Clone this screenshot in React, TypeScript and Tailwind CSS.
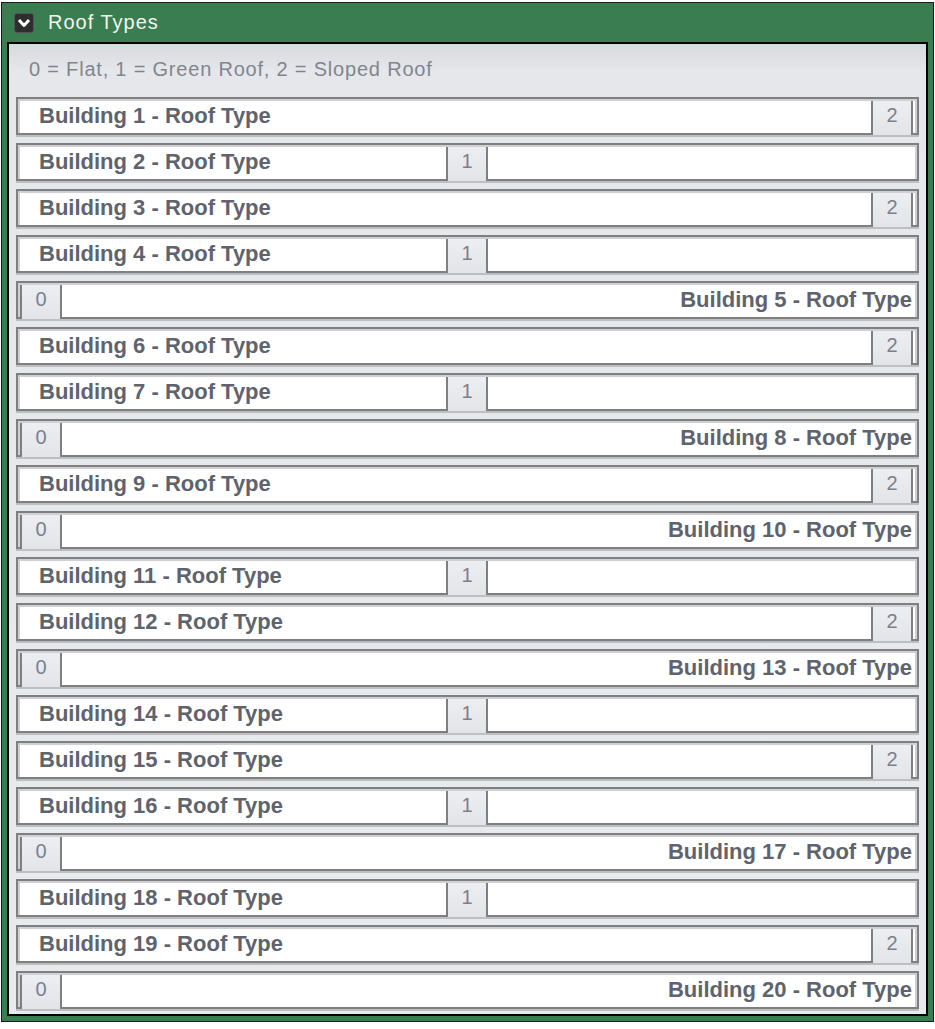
import React from "react";

const values = [2, 1, 2, 1, 0, 2, 1, 0, 2, 0, 1, 2, 0, 1, 2, 1, 0, 1, 2, 0];

function Row({ n, v }: { n: number; v: number }) {
  const label = `Building ${n} - Roof Type`;
  const thumbLeft = v === 0 ? 0 : v === 1 ? 426 : 851;
  return (
    <div className="ml-[7px] h-[38px] w-[903px] shrink-0 border-2 border-[#7f7f7f] shadow-[0_2px_0_#bdbec2]">
      <div className="h-full w-full border-x-2 border-t-2 border-[#cfd0d3] bg-white">
        <div className="relative flex h-full w-full items-center">
          {v === 0 ? (
            <div className="flex w-full justify-end pb-[3px] pr-[3px]">
              <span className="text-[22px] font-bold leading-none text-[#5e636d]">{label}</span>
            </div>
          ) : (
            <div className="flex w-full justify-start pb-[3px] pl-[19px]">
              <span className="text-[22px] font-bold leading-none text-[#5e636d]">{label}</span>
            </div>
          )}
          <div
            className="absolute top-0 flex h-[34px] w-[42px] justify-center border-x-2 border-[#7f7f7f] bg-[linear-gradient(to_bottom,#eceef1,#e3e4e8)] pt-[2px] text-[20px] leading-[24px] text-[#7b808a]"
            style={{ left: thumbLeft }}
          >
            {v}
          </div>
        </div>
      </div>
    </div>
  );
}

export default function App() {
  return (
    <div
      className="h-[1029px] w-[935px] bg-white pl-[1px] pt-[2px]"
      style={{ fontFamily: '"Liberation Sans", Arial, sans-serif' }}
    >
      <div className="flex h-[1020px] w-[933px] flex-col border border-[#1a1a1a] bg-[#3a7d50]">
        <div className="flex h-[39px] shrink-0 items-center pl-[12px]">
          <div className="flex h-[20px] w-[20px] items-center justify-center rounded-[3px] border border-[#555] bg-[#2e2e2e]">
            <svg width="14" height="10" viewBox="0 0 14 10">
              <path d="M2 2 L7 7.5 L12 2" fill="none" stroke="#ffffff" strokeWidth="3" strokeLinejoin="round" />
            </svg>
          </div>
          <span className="ml-[14px] pb-[2px] text-[20px] leading-none tracking-[1px] text-[#f2f4f2]">Roof Types</span>
        </div>
        <div className="mx-[5px] flex h-[974px] shrink-0 flex-col border-2 border-black bg-[linear-gradient(to_bottom,#d8d9dd_0px,#e6e7eb_28px,#e9eaee_100%)]">
          <div className="flex h-[53px] shrink-0 items-center pl-[20px] pb-[4px]">
            <span className="text-[20px] leading-none tracking-[0.8px] text-[#80858f]">
              0 = Flat, 1 = Green Roof, 2 = Sloped Roof
            </span>
          </div>
          <div className="flex flex-col gap-[8px]">
            {values.map((v, i) => (
              <Row key={i} n={i + 1} v={v} />
            ))}
          </div>
        </div>
      </div>
    </div>
  );
}
